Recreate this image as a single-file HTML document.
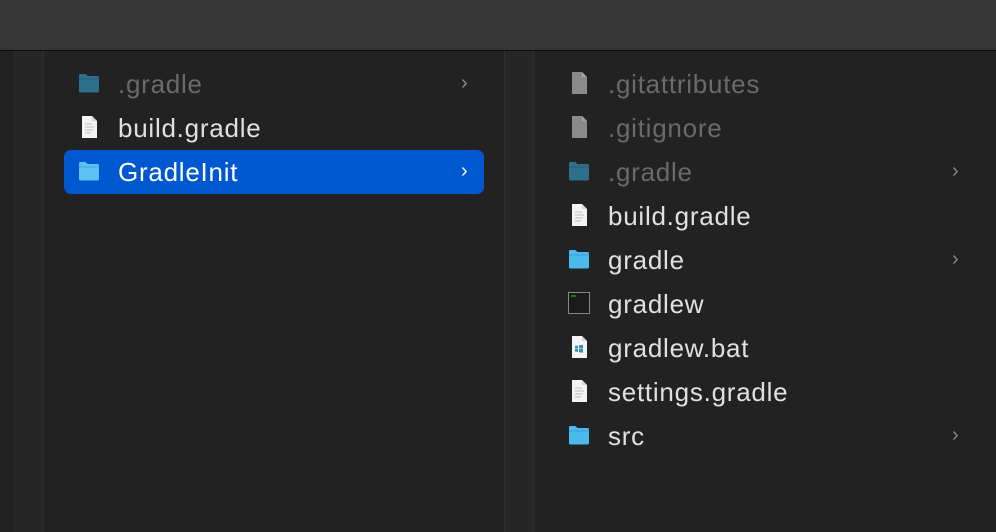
<!DOCTYPE html>
<html><head><style>
body{margin:0;width:996px;height:532px;background:#222;overflow:hidden;font-family:"Liberation Sans",sans-serif;position:relative}
.tb{position:absolute;left:0;top:0;width:996px;height:50px;background:#363636;border-bottom:1px solid #0c0c0c}
.strip{position:absolute;top:51px;height:481px;background:#262626;border-left:1px solid #303030;border-right:1px solid #303030}
.row{position:absolute;height:44px;line-height:46px;font-size:26px;letter-spacing:0.75px;color:#e0e0e0}
.row .ic{position:absolute;left:0;top:11px}
.row .t{position:absolute;left:40px;top:0;white-space:nowrap}
.dim{color:#6a6a6a}
.chev{position:absolute;top:0;font-size:20px;color:#8a8a8a}
.sel{position:absolute;left:64px;top:150px;width:420px;height:44px;background:#0058d0;border-radius:7px}
</style></head><body>
<div class="tb"></div>
<div class="strip" style="left:14px;width:28px"></div>
<div class="strip" style="left:504px;width:28px"></div>
<div class="sel"></div>

<svg width="0" height="0" style="position:absolute">
<defs>
<symbol id="fold" viewBox="0 0 22 22"><path d="M1 3.5q0-1.5 1.5-1.5h5l2 2h10q1.5 0 1.5 1.5V19q0 1.5-1.5 1.5h-17Q1 20.5 1 19z" fill="currentColor"/><path d="M1 7h20" stroke="rgba(0,0,0,.15)"/></symbol>
<symbol id="doc" viewBox="0 0 22 22"><path d="M4 0h10l5 5v17H4z" fill="#f4f4f4"/><path d="M14 0v5h5" fill="#d8d8d8"/><path d="M7 8h7M7 11h9M7 14h8M7 17h6" stroke="#bbb" stroke-width="1"/></symbol>
<symbol id="gdoc" viewBox="0 0 22 22"><path d="M4 0h10l5 5v17H4z" fill="#8a8a8a"/><path d="M14 0v5h5" fill="#a5a5a5"/></symbol>
</defs></svg>

<div class="row" style="left:78px;top:61px"><svg class="ic" width="22" height="22" style="color:#2f6f8e"><use href="#fold"/></svg><span class="t dim">.gradle</span></div>
<div class="chev" style="left:461px;top:61px;line-height:44px">&#8250;</div>
<div class="row" style="left:78px;top:105px"><svg class="ic" width="22" height="22"><use href="#doc"/></svg><span class="t">build.gradle</span></div>
<div class="row" style="left:78px;top:149px;color:#fff"><svg class="ic" width="22" height="22" style="color:#5ec3f2"><use href="#fold"/></svg><span class="t">GradleInit</span></div>
<div class="chev" style="left:461px;top:149px;line-height:44px;color:#fff">&#8250;</div>

<div class="row" style="left:568px;top:61px"><svg class="ic" width="22" height="22"><use href="#gdoc"/></svg><span class="t dim">.gitattributes</span></div>
<div class="row" style="left:568px;top:105px"><svg class="ic" width="22" height="22"><use href="#gdoc"/></svg><span class="t dim">.gitignore</span></div>
<div class="row" style="left:568px;top:149px"><svg class="ic" width="22" height="22" style="color:#2f6f8e"><use href="#fold"/></svg><span class="t dim">.gradle</span></div>
<div class="chev" style="left:952px;top:149px;line-height:44px">&#8250;</div>
<div class="row" style="left:568px;top:193px"><svg class="ic" width="22" height="22"><use href="#doc"/></svg><span class="t">build.gradle</span></div>
<div class="row" style="left:568px;top:237px"><svg class="ic" width="22" height="22" style="color:#4bb8ee"><use href="#fold"/></svg><span class="t">gradle</span></div>
<div class="chev" style="left:952px;top:237px;line-height:44px">&#8250;</div>
<div class="row" style="left:568px;top:281px"><svg class="ic" width="22" height="22"><rect x="0.5" y="0.5" width="21" height="21" fill="#1a1a1a" stroke="#888"/><path d="M3 4h5" stroke="#3c3" stroke-width="1"/></svg><span class="t">gradlew</span></div>
<div class="row" style="left:568px;top:325px"><svg class="ic" width="22" height="22"><path d="M4 0h10l5 5v17H4z" fill="#f4f4f4"/><path d="M14 0v5h5" fill="#d8d8d8"/><path d="M7 10l3-.5v3H7zM11 9.3l4-.6v3.8h-4zM7 13h3v3l-3-.5zM11 13h4v3.8l-4-.6z" fill="#3a8fb8"/></svg><span class="t">gradlew.bat</span></div>
<div class="row" style="left:568px;top:369px"><svg class="ic" width="22" height="22"><use href="#doc"/></svg><span class="t">settings.gradle</span></div>
<div class="row" style="left:568px;top:413px"><svg class="ic" width="22" height="22" style="color:#4bb8ee"><use href="#fold"/></svg><span class="t">src</span></div>
<div class="chev" style="left:952px;top:413px;line-height:44px">&#8250;</div>
</body></html>
